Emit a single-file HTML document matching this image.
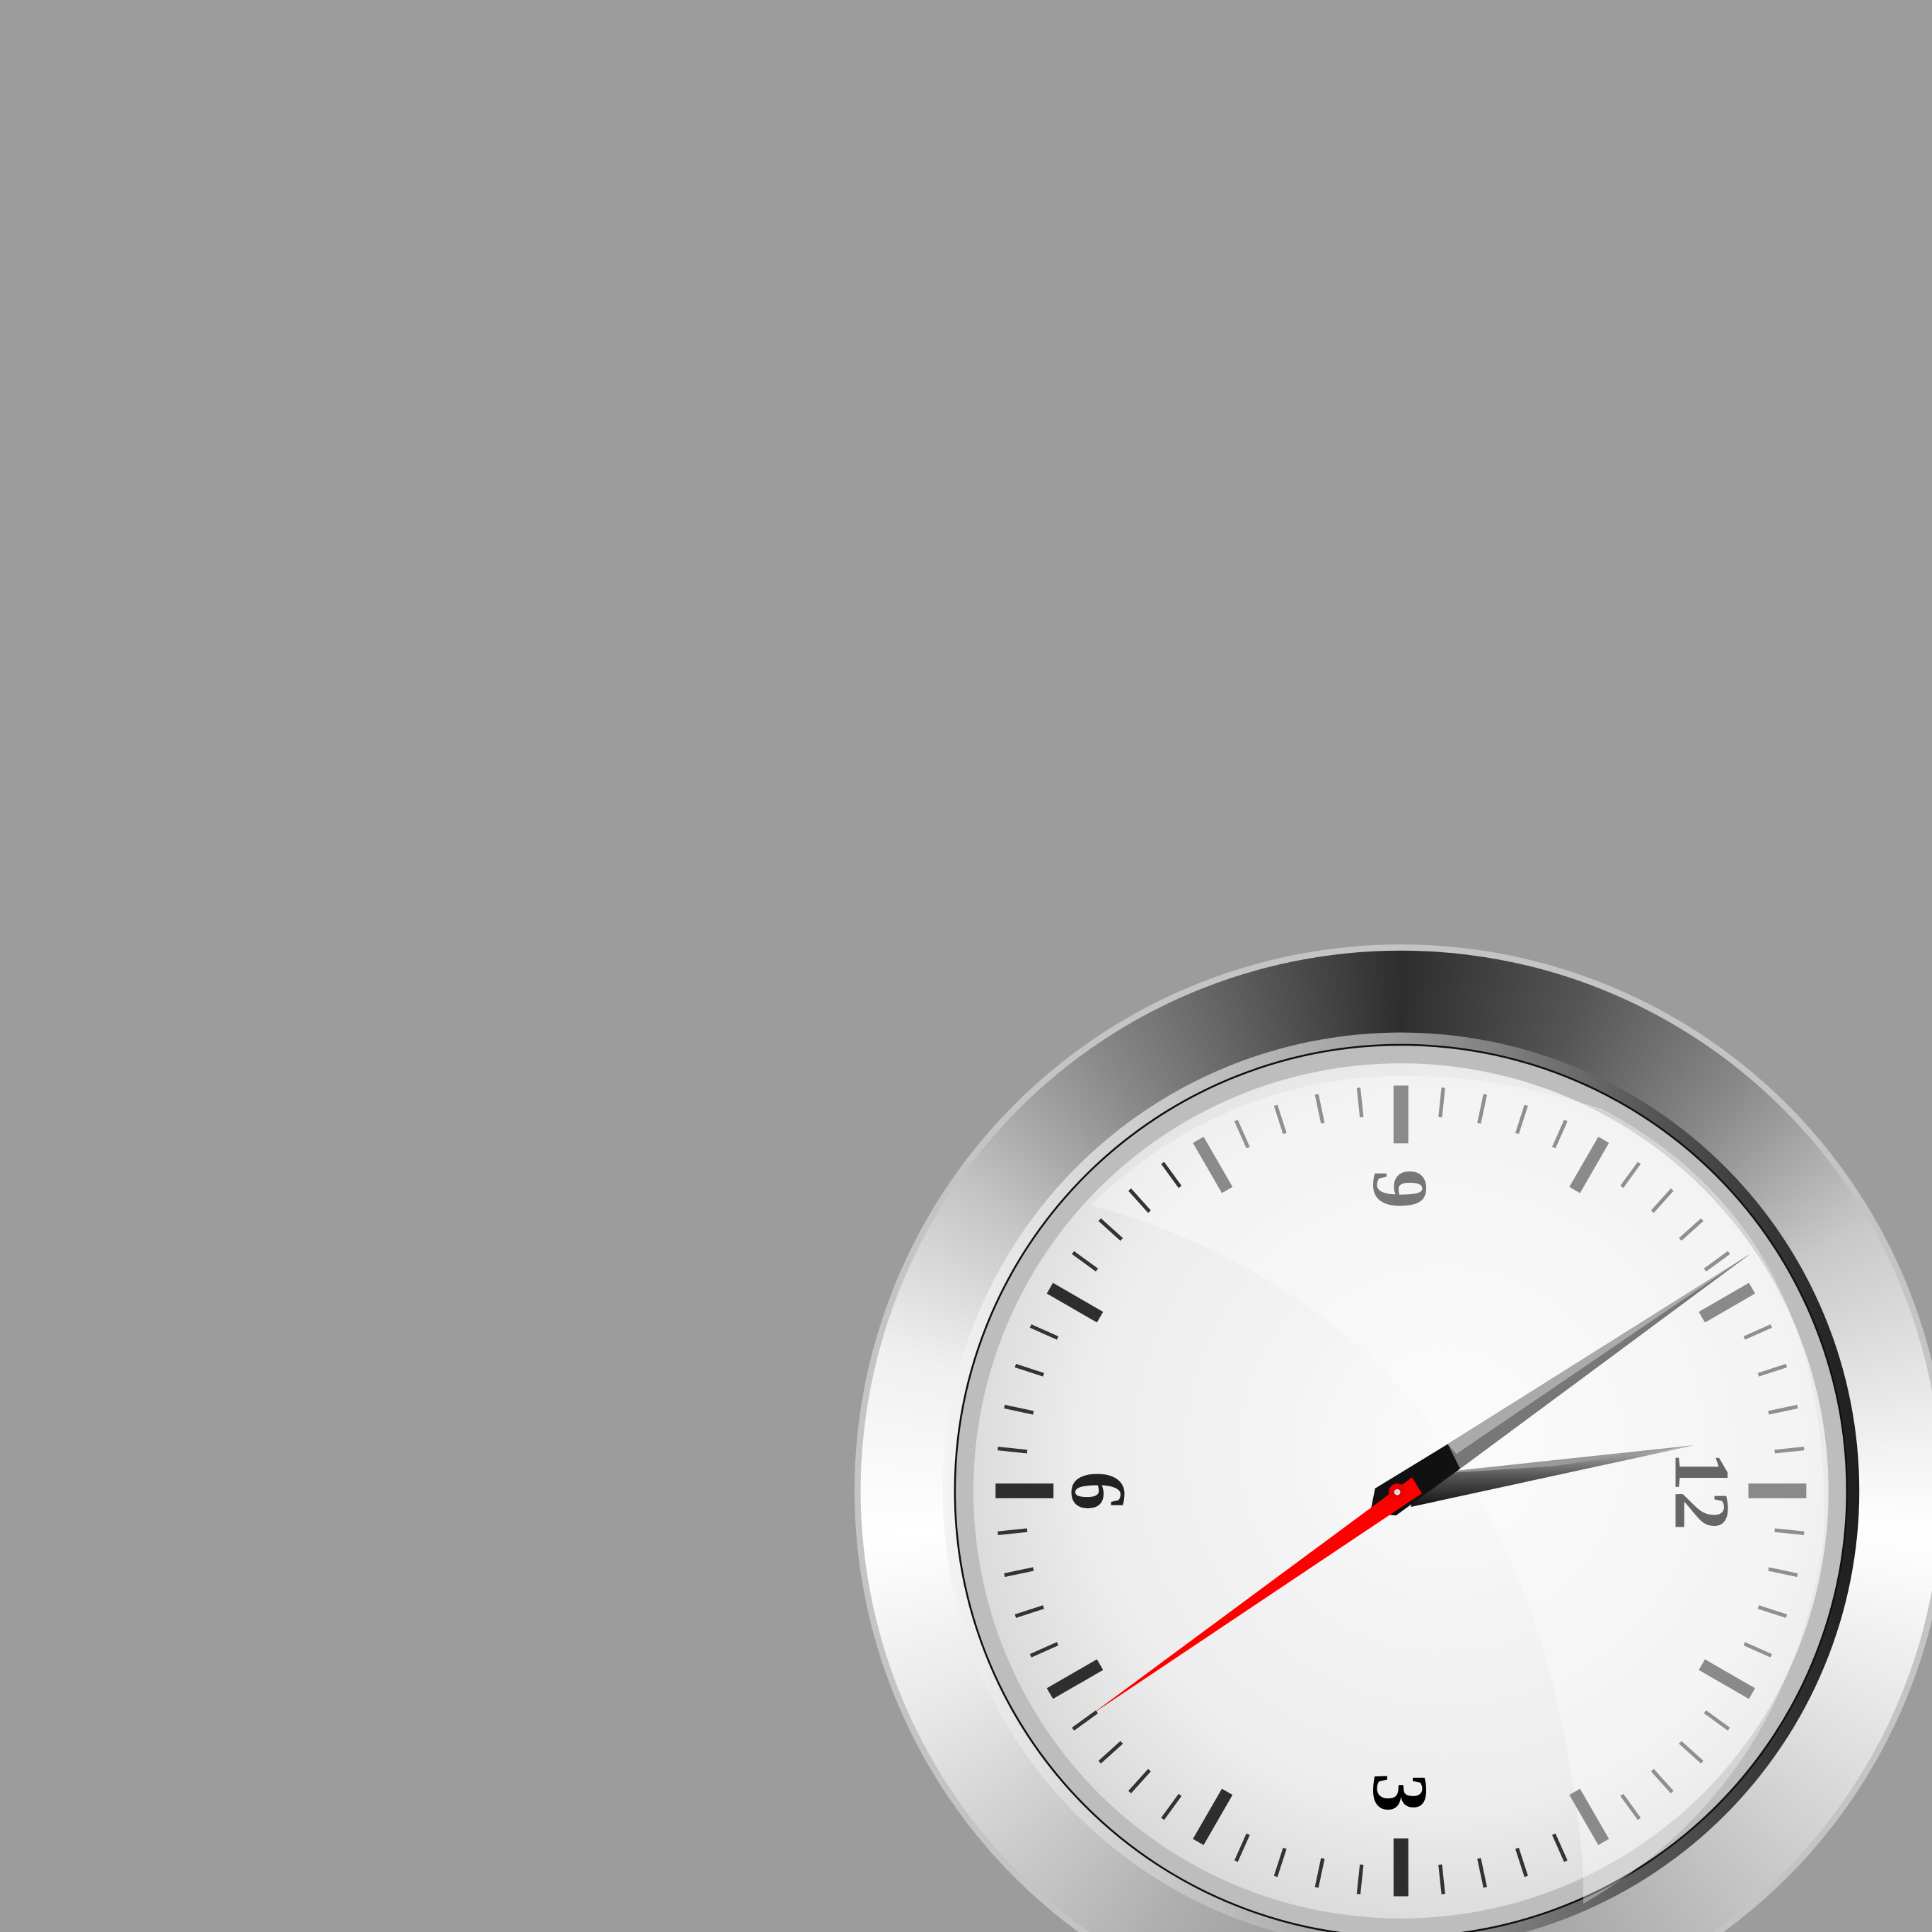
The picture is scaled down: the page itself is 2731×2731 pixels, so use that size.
<!DOCTYPE html>
<html><head><meta charset="utf-8"><style>
html,body{margin:0;padding:0;background:#9c9c9c;overflow:hidden;width:2731px;height:2731px}
#wrap{width:2731px;height:2731px;position:relative;overflow:hidden}
#bez{position:absolute;border-radius:50%;
left:calc((1137 - 440)*1.7417px);top:calc((1210 - 440)*1.7417px);
width:calc(880*1.7417px);height:calc(880*1.7417px);
background:conic-gradient(#2e2e2e 0deg,#555 20deg,#8a8a8a 40deg,#c8c8c8 60deg,#f2f2f2 85deg,#fff 95deg,#e6e6e6 115deg,#b5b5b5 150deg,#909090 180deg,#b0b0b0 210deg,#e8e8e8 245deg,#fff 265deg,#f0f0f0 285deg,#c4c4c4 305deg,#8a8a8a 325deg,#555 345deg,#2e2e2e 360deg)}
svg{position:absolute;left:0;top:0}
</style></head><body>
<div id="wrap">
<div id="bez"></div>
<svg width="2731" height="2731" viewBox="0 0 1568 1568">
<defs>
<linearGradient id="ir" x1="0" y1="0" x2="1" y2="0">
<stop offset="0" stop-color="#f4f4f4"/><stop offset="0.5" stop-color="#9a9a9a"/><stop offset="1" stop-color="#1e1e1e"/></linearGradient>
<radialGradient id="fc" cx="0.55" cy="0.45" r="0.6">
<stop offset="0" stop-color="#fafafa"/><stop offset="0.7" stop-color="#ededed"/><stop offset="1" stop-color="#d6d6d6"/></radialGradient>
<linearGradient id="mh" x1="0" y1="0" x2="0" y2="1">
<stop offset="0" stop-color="#bbb"/><stop offset="0.5" stop-color="#555"/><stop offset="1" stop-color="#111"/></linearGradient>
</defs>
<circle cx="1137" cy="1210" r="441" fill="none" stroke="#c4c4c4" stroke-width="5"/>
<circle cx="1137" cy="1210" r="372" fill="url(#ir)"/>
<circle cx="1137" cy="1210" r="362" fill="#bdbdbd" stroke="#111" stroke-width="1.5"/>
<circle cx="1137" cy="1210" r="347" fill="url(#fc)"/>
<path d="M885 978 Q1250 1080 1285 1520 L1285 1545 Q1450 1450 1480 1250 Q1490 1000 1300 900 Q1050 820 885 978Z" fill="#fff" opacity="0.35"/>
<g id="clk" transform="translate(1137 1210) rotate(90)"></g>
<polygon points="1150,1197 1375,1173 1145,1223" fill="url(#mh)"/>
<polygon points="1150,1197 1375,1173 1260,1190" fill="#999"/>
<polygon points="1116,1208 1175,1172 1420,1018 1185,1192 1133,1230 1112,1228" fill="#111"/>
<polygon points="1175,1172 1420,1018 1185,1192" fill="#777"/>
<polygon points="1175,1172 1420,1018 1182,1180" fill="#aaa"/>
<polygon points="885,1392 1146,1199 1154,1212" fill="#f00"/>
<circle cx="1134" cy="1211" r="7" fill="#e00"/>
<circle cx="1134" cy="1211" r="2.5" fill="#ddd"/>
</svg>
</div>
<script>
var g=document.getElementById('clk'),s='';
for(var i=0;i<60;i++){var a=i*6*Math.PI/180,sx=Math.sin(a),cy=-Math.cos(a);
var maj=i%5==0;var r1=maj?282:305,r2=329,w=maj?(i%15==0?12:10):3;
var scr=(i*6+90)%360;var dark=(scr>150&&scr<330);
var col=maj?(dark?'#2e2e2e':'#8a8a8a'):(dark?'#333':'#8f8f8f');
s+='<line x1="'+sx*r1+'" y1="'+cy*r1+'" x2="'+sx*r2+'" y2="'+cy*r2+'" stroke="'+col+'" stroke-width="'+w+'"/>';}
var nums=[['12',0,-245,'#666'],['3',245,0,'#000'],['6',0,245,'#222'],['9',-245,0,'#777']];
nums.forEach(function(n){s+='<text x="'+n[1]+'" y="'+(n[2]+22)+'" text-anchor="middle" font-family="Liberation Serif,serif" font-weight="bold" font-size="64" fill="'+n[3]+'">'+n[0]+'</text>';});
g.innerHTML=s;
</script>
</body></html>
